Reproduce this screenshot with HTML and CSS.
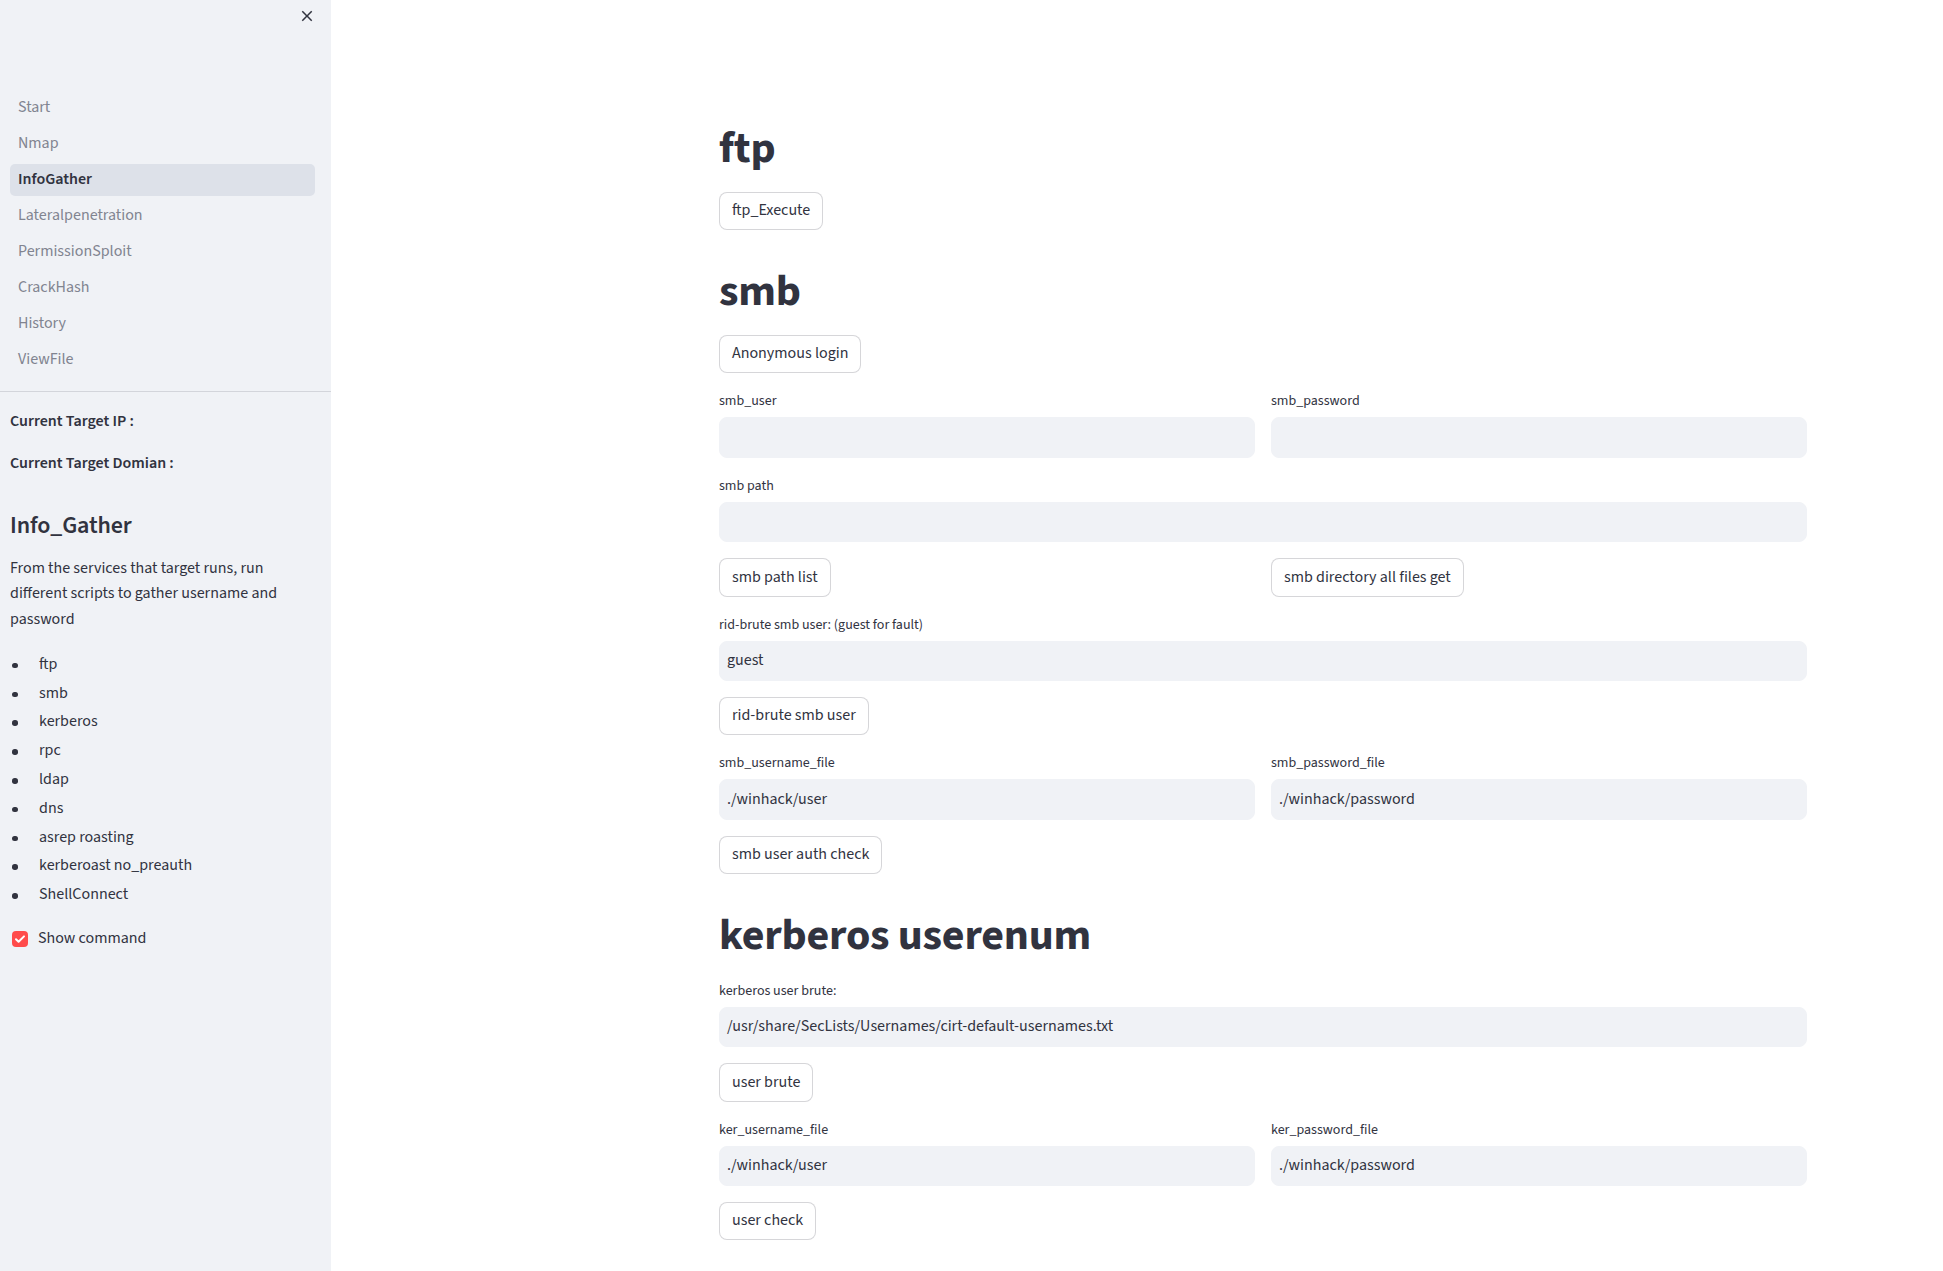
FILE: index.html
```html
<!DOCTYPE html>
<html lang="en">
<head>
<meta charset="utf-8">
<title>InfoGather</title>
<link rel="stylesheet" href="styles.css">
</head>
<body>
<div class="app">
  <aside class="sidebar">
    <div class="sidebar-header">
      <button class="close-btn" type="button" aria-label="Close sidebar">
        <svg width="18" height="18" viewBox="0 0 24 24"><path fill="#31333f" d="M19 6.41L17.59 5 12 10.59 6.41 5 5 6.41 10.59 12 5 17.59 6.41 19 12 13.41 17.59 19 19 17.59 13.41 12z"/></svg>
      </button>
    </div>
    <nav class="nav">
      <ul class="nav-list">
        <li><a class="nav-link">Start</a></li>
        <li><a class="nav-link">Nmap</a></li>
        <li><a class="nav-link active">InfoGather</a></li>
        <li><a class="nav-link">Lateralpenetration</a></li>
        <li><a class="nav-link">PermissionSploit</a></li>
        <li><a class="nav-link">CrackHash</a></li>
        <li><a class="nav-link">History</a></li>
        <li><a class="nav-link">ViewFile</a></li>
      </ul>
    </nav>
    <div class="sidebar-content">
      <p class="sb-p"><strong>Current Target IP :</strong></p>
      <p class="sb-p"><strong>Current Target Domian :</strong></p>
      <h2 class="sb-h2">Info_Gather</h2>
      <p class="sb-p sb-text">From the services that target runs, run different scripts to gather username and password</p>
      <ul class="sb-list">
        <li>ftp</li>
        <li>smb</li>
        <li>kerberos</li>
        <li>rpc</li>
        <li>ldap</li>
        <li>dns</li>
        <li>asrep roasting</li>
        <li>kerberoast no_preauth</li>
        <li>ShellConnect</li>
      </ul>
      <label class="checkbox">
        <span class="check-box">
          <svg width="12" height="12" viewBox="0 0 12 12"><path d="M2 6.2l2.6 2.6L10 3.4" fill="none" stroke="#fff" stroke-width="2" stroke-linecap="round" stroke-linejoin="round"/></svg>
        </span>
        <span class="check-label">Show command</span>
      </label>
    </div>
  </aside>

  <main class="main">
    <div class="block">
      <h1 class="h1">ftp</h1>
      <div><button class="btn" type="button">ftp_Execute</button></div>

      <h1 class="h1">smb</h1>
      <div><button class="btn" type="button">Anonymous login</button></div>

      <div class="cols">
        <div class="field">
          <div class="label">smb_user</div>
          <div class="input"></div>
        </div>
        <div class="field">
          <div class="label">smb_password</div>
          <div class="input"></div>
        </div>
      </div>

      <div class="field">
        <div class="label">smb path</div>
        <div class="input"></div>
      </div>

      <div class="cols">
        <div><button class="btn" type="button">smb path list</button></div>
        <div><button class="btn" type="button">smb directory all files get</button></div>
      </div>

      <div class="field">
        <div class="label">rid-brute smb user: (guest for fault)</div>
        <div class="input">guest</div>
      </div>
      <div><button class="btn" type="button">rid-brute smb user</button></div>

      <div class="cols">
        <div class="field">
          <div class="label">smb_username_file</div>
          <div class="input">./winhack/user</div>
        </div>
        <div class="field">
          <div class="label">smb_password_file</div>
          <div class="input">./winhack/password</div>
        </div>
      </div>
      <div><button class="btn" type="button">smb user auth check</button></div>

      <h1 class="h1">kerberos userenum</h1>
      <div class="field">
        <div class="label">kerberos user brute:</div>
        <div class="input">/usr/share/SecLists/Usernames/cirt-default-usernames.txt</div>
      </div>
      <div><button class="btn" type="button">user brute</button></div>

      <div class="cols">
        <div class="field">
          <div class="label">ker_username_file</div>
          <div class="input">./winhack/user</div>
        </div>
        <div class="field">
          <div class="label">ker_password_file</div>
          <div class="input">./winhack/password</div>
        </div>
      </div>
      <div><button class="btn" type="button">user check</button></div>
    </div>
  </main>
</div>
</body>
</html>
```
FILE: styles.css
```css
* { box-sizing: border-box; }

html, body {
  margin: 0;
  padding: 0;
  background: #ffffff;
}

body {
  font-family: "Source Sans 3", "Source Sans Pro", "Noto Sans", sans-serif;
  font-size: 16px;
  line-height: 1.6;
  color: #31333f;
}

.app {
  display: flex;
  min-height: 1271px;
}

/* ---------- Sidebar ---------- */
.sidebar {
  width: 331px;
  flex: 0 0 331px;
  background: #f0f2f6;
  min-height: 1271px;
}

.sidebar-header {
  height: 32px;
  display: flex;
  align-items: center;
  justify-content: flex-end;
  padding-right: 13px;
}

.close-btn {
  width: 22px;
  height: 22px;
  padding: 0;
  border: none;
  background: transparent;
  display: flex;
  align-items: center;
  justify-content: center;
}

.nav {
  padding: 59.6px 16px 15px 10px;
  border-bottom: 1px solid #d3d5db;
}

.nav-list {
  list-style: none;
  margin: 0;
  padding: 0;
  display: flex;
  flex-direction: column;
  gap: 4px;
}

.nav-link {
  display: flex;
  align-items: center;
  height: 32px;
  padding: 0 8px;
  border-radius: 5px;
  color: #818490;
  font-size: 16px;
  text-decoration: none;
}

.nav-link.active {
  background: #dde1e9;
  color: #31333f;
  font-weight: 600;
}

.sidebar-content {
  padding: 16.5px 16px 0 10px;
  display: flex;
  flex-direction: column;
  gap: 16px;
}

.sb-p {
  margin: 0;
  line-height: 26px;
}

.sb-p.sb-text {
  line-height: 25.6px;
}

.sb-p strong { font-weight: 600; }

.sb-h2 {
  margin: 0;
  padding-top: 20px;
  margin-bottom: -1px;
  font-size: 24px;
  font-weight: 600;
  line-height: 28.8px;
  letter-spacing: -0.005em;
}

.sb-list {
  list-style: none;
  margin: 0;
  padding: 3.2px 0;
  display: flex;
  flex-direction: column;
  gap: 3.2px;
}

.sb-list li {
  display: flex;
  align-items: center;
  line-height: 25.6px;
}

.sb-list li::before {
  content: "";
  width: 5.5px;
  height: 5.5px;
  border-radius: 50%;
  background: #31333f;
  margin: 2px 21.5px 0 2px;
  flex: 0 0 auto;
}

.checkbox {
  display: flex;
  align-items: center;
  height: 24px;
  padding-left: 2px;
}

.check-box {
  width: 16px;
  height: 16px;
  border-radius: 4px;
  background: #ff4b4b;
  display: flex;
  align-items: center;
  justify-content: center;
  margin-right: 10px;
}

.check-label {
  line-height: 25.6px;
}

/* ---------- Main ---------- */
.main {
  flex: 1;
  padding: 103px 136px 40px 388px;
}

.block {
  display: flex;
  flex-direction: column;
  gap: 16px;
}

.h1 {
  margin: 0;
  padding-top: 20px;
  font-size: 44px;
  font-weight: 700;
  line-height: 52.8px;
  letter-spacing: -0.005em;
}

.btn {
  display: inline-flex;
  align-items: center;
  justify-content: center;
  min-height: 38.4px;
  padding: 4px 12px;
  border: 1px solid rgba(49, 51, 63, 0.2);
  border-radius: 8px;
  background: #ffffff;
  color: #31333f;
  font-family: inherit;
  font-size: 16px;
  line-height: 1.6;
  margin: 0;
}

.cols {
  display: grid;
  grid-template-columns: 1fr 1fr;
  gap: 16px;
}

.field {
  display: flex;
  flex-direction: column;
}

.label {
  font-size: 14px;
  line-height: 24px;
  min-height: 24px;
  margin-bottom: 4px;
  color: #31333f;
}

.input {
  height: 40.4px;
  background: #f0f2f6;
  border: 1px solid #f0f2f6;
  border-radius: 8px;
  padding: 0 7px;
  display: flex;
  align-items: center;
  font-size: 16px;
  color: #31333f;
  white-space: nowrap;
}
```
